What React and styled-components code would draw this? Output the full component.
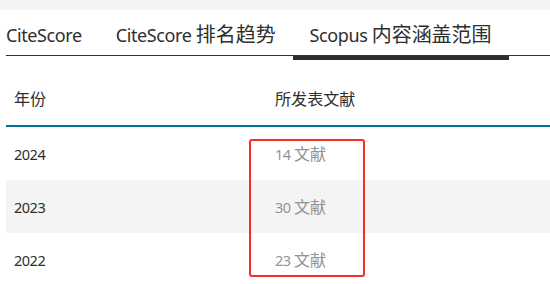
import React from 'react';
import styled, { createGlobalStyle } from 'styled-components';

const GlobalStyle = createGlobalStyle`
  body {
    margin: 0;
    background: #fff;
    overflow: hidden;
    font-family: "Noto Sans", "Noto Sans CJK SC", sans-serif;
    color: #2e2e2e;
  }
`;

const TopStrip = styled.div`
  height: 10px;
  background: #f4f4f4;
`;

const TabList = styled.div`
  display: flex;
  margin-left: 6px;
  border-bottom: 1px solid #323232;
`;

const Tab = styled.div`
  position: relative;
  padding: 13px 17px 8px;
  padding-left: ${(p) => (p.$first ? '0' : '17px')};
  font-size: 18px;
  letter-spacing: -0.4px;
  line-height: 24px;
  white-space: nowrap;
  color: #2e2e2e;

  &::after {
    content: '';
    display: ${(p) => (p.$active ? 'block' : 'none')};
    position: absolute;
    left: 0;
    right: 0;
    bottom: -5px;
    height: 4px;
    background: #2e2e2e;
  }
`;

// Chinese glyphs sit a little larger than the Latin text around them
const Han = styled.span`
  font-size: ${(p) => p.$scale || 1.11}em;
  letter-spacing: 0;
  line-height: 1;
`;

const TableWrap = styled.div`
  position: relative;
  margin: 16px 0 0 6px;
  width: 544px;
`;

const Row = styled.div`
  display: grid;
  grid-template-columns: 261px 1fr;
  align-items: center;
  height: 53px;
  background: ${(p) => (p.$shaded ? '#f4f4f4' : 'transparent')};
  border-bottom: ${(p) => (p.$head ? '2px solid #007398' : 'none')};
`;

const Cell = styled.div`
  padding-left: 8px;
  font-size: 14.5px;
  letter-spacing: -0.5px;
  color: ${(p) => (p.$muted ? '#939393' : '#2e2e2e')};
`;

const Highlight = styled.div`
  position: absolute;
  left: 243px;
  top: 67px;
  width: 112px;
  height: 134px;
  border: 2px solid #fb2b1f;
  border-radius: 3px;
`;

const rows = [
  { year: 2024, count: 14 },
  { year: 2023, count: 30 },
  { year: 2022, count: 23 },
];

const App = () => {
  return (
    <>
      <GlobalStyle />
      <TopStrip />
      <TabList>
        <Tab $first>CiteScore</Tab>
        <Tab>
          CiteScore <Han>排名趋势</Han>
        </Tab>
        <Tab $active>
          Scopus <Han>内容涵盖范围</Han>
        </Tab>
      </TabList>
      <TableWrap>
        <Row $head>
          <Cell>
            <Han $scale={1.11}>年份</Han>
          </Cell>
          <Cell>
            <Han $scale={1.11}>所发表文献</Han>
          </Cell>
        </Row>
        {rows.map((r, i) => (
          <Row key={r.year} $shaded={i % 2 === 1}>
            <Cell>{r.year}</Cell>
            <Cell $muted>
              {r.count} <Han $scale={1.11}>文献</Han>
            </Cell>
          </Row>
        ))}
        <Highlight />
      </TableWrap>
    </>
  );
};

export default App;
